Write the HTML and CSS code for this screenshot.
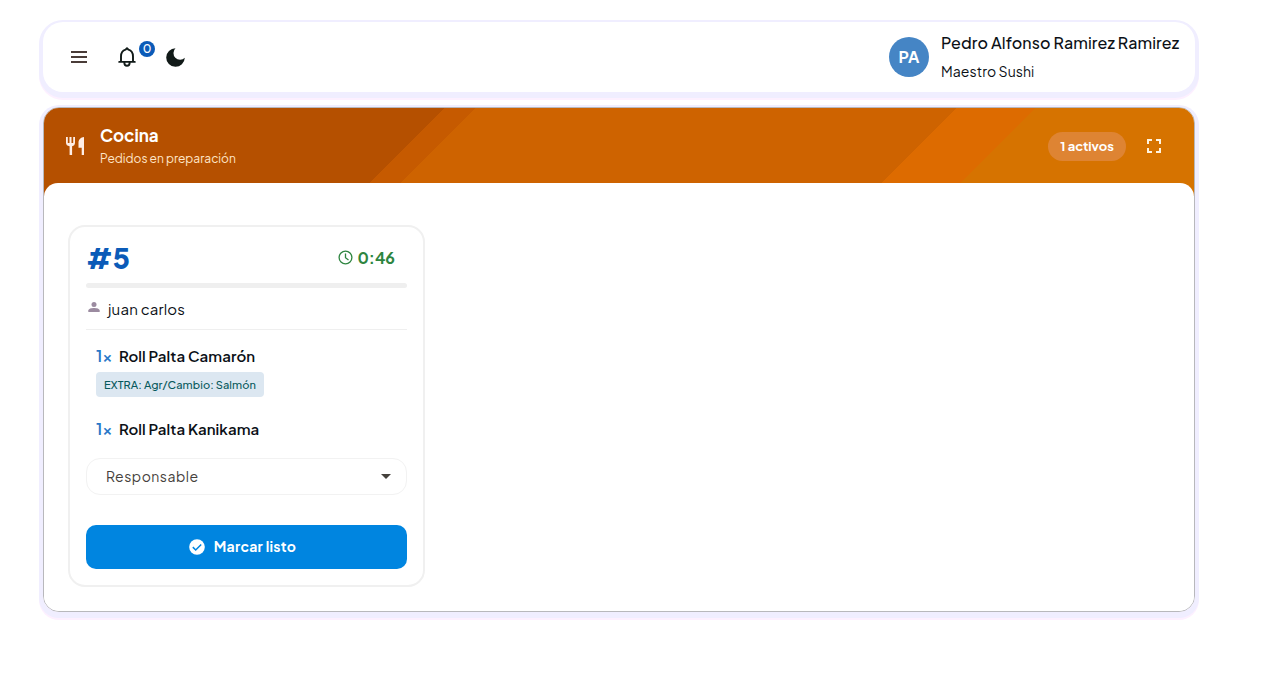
FILE: index.html
```html
<!DOCTYPE html>
<html lang="es">
<head>
<meta charset="UTF-8">
<meta name="viewport" content="width=device-width, initial-scale=1.0">
<title>Cocina</title>
<link rel="stylesheet" href="styles.css">
</head>
<body>

<header class="topbar">
  <button class="icon-btn menu-btn" aria-label="Menú">
    <svg width="16" height="12" viewBox="0 0 16 12" fill="#4a3c38"><path d="M0 0h16v2H0zM0 5h16v2H0zM0 10h16v2H0z"/></svg>
  </button>
  <button class="icon-btn bell-btn" aria-label="Notificaciones">
    <svg width="18" height="20" viewBox="0 0 18 20" fill="none" stroke="#111a18" stroke-width="1.9" stroke-linejoin="round" stroke-linecap="round"><path d="M1.2 14.900h15.600M3 14.600V9.400C3 6 5 3.500 7.600 2.700L9 1.200l1.400 1.500C13 3.500 15 6 15 9.400v5.200M6.300 15.500c0 4.400 5.400 4.400 5.400 0"/></svg>
    <span class="badge">0</span>
  </button>
  <button class="icon-btn moon-btn" aria-label="Tema oscuro">
    <svg width="19" height="19" viewBox="0 0 19 19" fill="#111a18"><path d="M9.500 0.200A9.300 9.300 0 1 0 18.800 9.800A5.700 5.700 0 0 1 9.500 0.200z"/></svg>
  </button>
  <div class="user">
    <div class="avatar">PA</div>
    <div class="user-info">
      <div><span class="user-name">Pedro Alfonso Ramirez Ramirez</span></div>
      <div><span class="user-role">Maestro Sushi</span></div>
    </div>
  </div>
</header>

<main class="panel">
  <div class="panel-head">
    <svg class="food-icon" width="20" height="20" viewBox="0 0 20 20" fill="#ffeee6"><path d="M1 1h1.800v6h1.700V1h2v6h1.700V1H10v5.800c0 2-1.200 3.200-2.900 3.500V19H4.600v-8.700C2.300 10 1 8.800 1 6.800zM19 1v18h-2.300v-7.200H13.500V6.500C13.500 3.500 16 1.300 19 1z"/></svg>
    <div class="panel-title">
      <h2>Cocina</h2>
      <p>Pedidos en preparación</p>
    </div>
    <span class="chip">1 activos</span>
    <svg class="full-icon" width="14" height="14" viewBox="0 0 14 14" fill="none" stroke="#fff3df" stroke-width="2"><path d="M1 5V1h4M9 1h4v4M13 9v4H9M5 13H1V9"/></svg>
  </div>
  <div class="panel-body">
    <div class="order">
      <div class="order-head">
        <span class="order-num">#5</span>
        <svg width="15" height="15" viewBox="0 0 15 15" fill="none" stroke="#2e8540" stroke-width="1.300"><circle cx="7.500" cy="7.500" r="6.400"/><path d="M7.500 3.500v4.200l3 2.300"/></svg>
        <span class="order-time">0:46</span>
      </div>
      <div class="progress"></div>
      <div class="client">
        <svg width="12" height="10" viewBox="0 0 12 10" fill="#9b8ba0"><circle cx="6" cy="2.500" r="2.500"/><path d="M.300 10V8.600C.300 6.800 3.500 6 6 6s5.700.800 5.700 2.600V10z"/></svg>
        <span class="client-name">juan carlos</span>
      </div>
      <div class="item">
        <div class="item-line"><span class="qty">1×</span><span class="dish">Roll Palta Camarón</span></div>
        <span class="extra">EXTRA: Agr/Cambio: Salmón</span>
      </div>
      <div class="item">
        <div class="item-line"><span class="qty">1×</span><span class="dish">Roll Palta Kanikama</span></div>
      </div>
      <div class="select">
        <span class="select-label">Responsable</span>
        <svg width="10" height="5" viewBox="0 0 10 5" fill="#45413c"><path d="M0 0h10L5 5z"/></svg>
      </div>
      <button class="done-btn">
        <svg width="16" height="16" viewBox="0 0 16 16"><circle cx="8" cy="8" r="7.800" fill="#fff"/><path fill="none" stroke="#0085e0" stroke-width="1.500" d="M3.800 8.100L6.700 11l5.500-5.500"/></svg>
        <span>Marcar listo</span>
      </button>
    </div>
  </div>
</main>

</body>
</html>
```
FILE: styles.css
```css
* {
  box-sizing: border-box;
}
body {
  margin: 0;
  min-height: 100vh;
  padding: 22px 69px 20px 43px;
  background-color: #fff;
  font-family: "Plus Jakarta Sans", Inter, sans-serif;
  color: #0b1016;
}
svg {
  display: block;
  flex-shrink: 0;
}
button {
  border: none;
  padding: 0;
  font-family: inherit;
  cursor: pointer;
}
.topbar {
  display: flex;
  align-items: center;
  height: 70px;
  padding: 0 15px 0 28px;
  border-radius: 20px;
  background-color: #fff;
  box-shadow: 0 2px 0 4px #f0eeff, 0 4px 0 4px #fdf0ff;
}
.icon-btn {
  display: flex;
  background: none;
}
.bell-btn {
  position: relative;
  margin-left: 31px;
}
.moon-btn {
  margin-left: 30px;
}
.badge {
  position: absolute;
  left: 21px;
  top: -6px;
  width: 16px;
  height: 16px;
  border-radius: 50%;
  background-color: #0b5bb8;
  color: #fff;
  font-size: 12px;
  font-weight: 500;
  line-height: 16px;
  text-align: center;
}
.user {
  display: flex;
  align-items: center;
  margin-left: auto;
}
.avatar {
  width: 40px;
  height: 40px;
  margin-right: 12px;
  border-radius: 50%;
  background-color: #4585c5;
  color: #fff;
  font-size: 16px;
  font-weight: 700;
  line-height: 40px;
  text-align: center;
}
.user-info {
  width: 239px;
  line-height: 28px;
  white-space: nowrap;
}
.user-name {
  font-size: 16px;
  font-weight: 500;
  letter-spacing: 0.1px;
}
.user-role {
  font-size: 14px;
  letter-spacing: 0.05px;
}
.panel {
  margin-top: 15px;
  height: 505px;
  border: 1px solid #b8b8bc;
  border-radius: 16px;
  box-shadow: 0 2px 0 4px #f0eeff, 0 4px 0 4px #fdf0ff;
  display: flex;
  flex-direction: column;
  overflow: hidden;
}
.panel-head {
  display: flex;
  align-items: center;
  height: 88px;
  padding: 0 33px 12px 21px;
  flex-shrink: 0;
  color: #fff;
  background: linear-gradient(135deg, #b55000 283px, #c65a00 283px, #c65a00 305px, #ce6300 305px, #ce6300 645px, #dd6b00 645px, #dd6b00 701px, #d67300 701px);
}
.panel-title {
  margin-left: 15px;
  padding-top: 2px;
  white-space: nowrap;
}
.panel-title h2 {
  margin: 0;
  font-size: 17px;
  font-weight: 700;
  line-height: 23px;
}
.panel-title p {
  margin: 0;
  font-size: 12px;
  line-height: 23px;
  color: #ffe6c8;
}
.chip {
  margin-left: auto;
  width: 78px;
  border-radius: 15px;
  background-color: #de8433;
  font-size: 13px;
  font-weight: 700;
  line-height: 29px;
  text-align: center;
  letter-spacing: -0.05px;
}
.full-icon {
  margin-left: 21px;
}
.panel-body {
  flex: 1;
  margin-top: -13px;
  padding: 42px 24px;
  border-radius: 14px 14px 0 0;
  background-color: #fff;
}
.order {
  width: 357px;
  height: 362px;
  padding: 16px;
  border: 2px solid #f0f0f0;
  border-radius: 17px;
}
.order-head {
  display: flex;
  align-items: center;
  height: 29px;
  padding: 0 12px 0 0;
}
.order-num {
  margin-right: auto;
  font-size: 28px;
  font-weight: 800;
  color: #0b5bb8;
}
.order-time {
  margin-left: 5px;
  font-size: 16px;
  font-weight: 700;
  color: #2e8540;
}
.progress {
  height: 5px;
  margin-top: 11px;
  border-radius: 3px;
  background-color: #efefef;
}
.client {
  display: flex;
  align-items: center;
  height: 42px;
  padding-left: 2px;
  border-bottom: 1px solid #efefef;
}
.client svg {
  margin-top: -4px;
}
.client-name {
  margin-left: 8px;
  font-size: 15px;
  letter-spacing: 0.18px;
}
.item {
  height: 73px;
  padding: 12px 10px 0;
}
.item + .item {
  height: 55px;
}
.item-line {
  display: flex;
  align-items: center;
  height: 26px;
  white-space: nowrap;
}
.qty {
  width: 23px;
  font-size: 16px;
  font-weight: 600;
  color: #2a78c8;
}
.dish {
  font-size: 15px;
  font-weight: 600;
  letter-spacing: 0.09px;
}
.extra {
  display: block;
  width: 168px;
  height: 25px;
  margin-top: 4px;
  padding-left: 8px;
  border-radius: 4px;
  background-color: #dce7f1;
  color: #07595c;
  font-size: 11px;
  font-weight: 500;
  line-height: 26px;
  letter-spacing: 0.11px;
  white-space: nowrap;
}
.select {
  display: flex;
  align-items: center;
  justify-content: space-between;
  height: 37px;
  padding: 0 15px 0 19px;
  border: 1px solid #f2f2f2;
  border-radius: 14px;
}
.select-label {
  margin-top: -1px;
  font-size: 14px;
  color: #45413c;
  letter-spacing: 0.5px;
}
.done-btn {
  display: flex;
  align-items: center;
  justify-content: center;
  width: 100%;
  height: 44px;
  margin-top: 30px;
  padding: 0 8px 0 0;
  border-radius: 10px;
  background-color: #0085e0;
  color: #fff;
  font-size: 14px;
  font-weight: 700;
  letter-spacing: 0.25px;
}
.done-btn span {
  margin-left: 9px;
  padding-bottom: 2px;
}
```
